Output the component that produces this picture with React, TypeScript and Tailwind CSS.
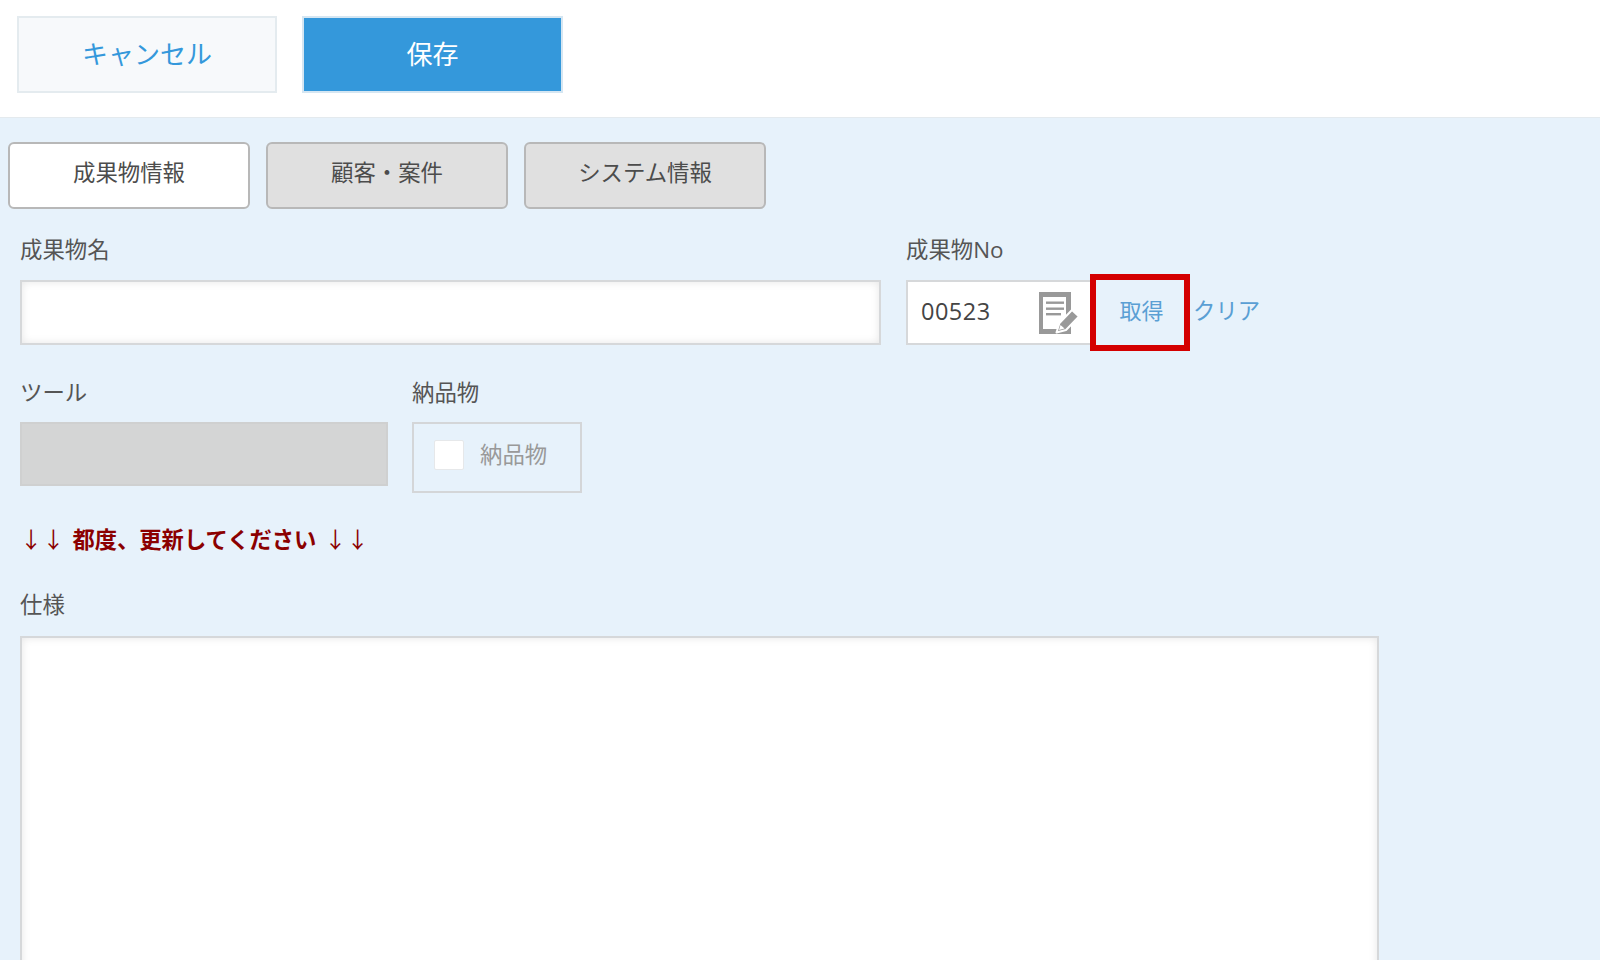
import React from 'react'

const font = { fontFamily: '"Open Sans", "Noto Sans CJK JP", sans-serif' }

function Tab({ label, active }: { label: string; active?: boolean }) {
  return (
    <button
      className={`w-[242px] h-[67px] rounded-[6px] border-2 border-[#b8b8b8] text-[22.4px] text-[#4c4c4c] pb-[5px] ${active ? 'bg-white' : 'bg-[#e0e0e0]'}`}
    >
      {label}
    </button>
  )
}

function Label({ children }: { children: React.ReactNode }) {
  return <div className="text-[22.4px] leading-[30px] text-[#555]">{children}</div>
}

function MemoIcon() {
  return (
    <svg width="41" height="42" viewBox="0 0 41 42" fill="none">
      <path d="M0 0h32v42H0z" fill="#999" />
      <path d="M4 5h23v32H4z" fill="#fff" />
      <rect x="7" y="9.500" width="18" height="2.400" fill="#999" />
      <rect x="7" y="15.500" width="18" height="2.400" fill="#999" />
      <rect x="7" y="21" width="15" height="2.400" fill="#999" />
      <path d="M33 18l7 6.500L27 38l-9.500 2.500L20.500 31z" fill="#999" stroke="#fff" strokeWidth="2" strokeLinejoin="round" />
      <path d="M21.500 33l4 3.500-5.500 1.500z" fill="#fff" />
    </svg>
  )
}

export default function App() {
  return (
    <div className="h-[960px] overflow-hidden bg-[#e7f2fb]" style={font}>
      <div className="h-[118px] bg-white border-b border-[#e4eaee] flex items-start gap-[25px] pl-[17px] pt-[16px]">
        <button className="w-[260px] h-[77px] bg-[#f7f9fb] border-2 border-[#e4ebef] text-[26px] text-[#3498db]">キャンセル</button>
        <button className="w-[261px] h-[77px] bg-[#3498db] border-2 border-[#d5e6f2] text-[26px] text-white">保存</button>
      </div>

      <div className="flex gap-[16px] pl-[8px] pt-[24px]">
        <Tab label="成果物情報" active />
        <Tab label="顧客・案件" />
        <Tab label="システム情報" />
      </div>

      <div className="pl-[20px] pt-[26px]">
        <div className="flex gap-[25px]">
          <div>
            <Label>成果物名</Label>
            <div className="mt-[15px] w-[861px] h-[65px] bg-white border-2 border-[#d6d8da] shadow-[inset_0_0_8px_rgba(0,0,0,0.1)]" />
          </div>
          <div>
            <Label>成果物No</Label>
            <div className="mt-[9px] flex items-center h-[77px]">
              <div className="w-[188px] h-[65px] bg-white border-2 border-r-0 border-[#d6d8da] flex items-center justify-between pl-[13px] pr-[14px]">
                <span className="text-[23.5px] text-[#444] tracking-[0.5px] pb-[2px]">00523</span>
                <MemoIcon />
              </div>
              <div className="-ml-[4px] w-[100px] h-[77px] border-[6px] border-[#d40000] flex items-center justify-center text-[22px] text-[#5a9fd4] pl-[3px] pb-[5px]">取得</div>
              <span className="ml-[3px] text-[22.4px] text-[#5a9fd4] pb-[3px]">クリア</span>
            </div>
          </div>
        </div>

        <div className="flex gap-[24px] mt-[27px]">
          <div>
            <Label>ツール</Label>
            <div className="mt-[14px] w-[368px] h-[64px] bg-[#d4d5d5] border-2 border-[#cfd0d0]" />
          </div>
          <div>
            <Label>納品物</Label>
            <div className="mt-[14px] w-[170px] h-[71px] border-2 border-[#d4d6d8] flex items-center pl-[20px] gap-[16px] pb-[6px]">
              <div className="w-[30px] h-[30px] bg-white border border-[#e6e8ea] rounded-[2px]" />
              <span className="text-[22.4px] text-[#999]">納品物</span>
            </div>
          </div>
        </div>

        <div className="mt-[32px] text-[22.3px] leading-[30px] font-bold text-[#8b0000]">
          <span className="font-normal">↓↓</span>
          <span className="mx-[2px]"> 都度、更新してください </span>
          <span className="font-normal">↓↓</span>
        </div>

        <div className="mt-[35px]">
          <Label>仕様</Label>
        </div>
        <div className="mt-[16px] w-[1359px] h-[400px] bg-white border-2 border-[#d6d8da] shadow-[inset_0_0_8px_rgba(0,0,0,0.1)]" />
      </div>
    </div>
  )
}
